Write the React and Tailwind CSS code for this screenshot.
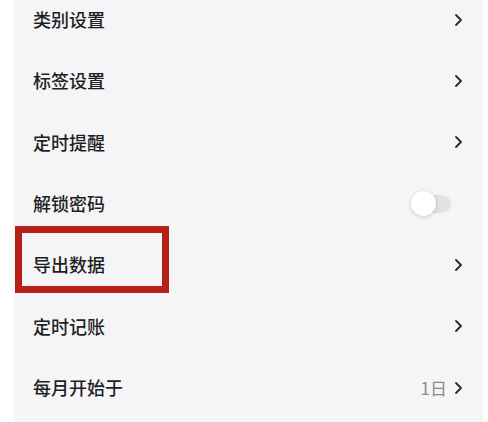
import React from "react";

const items = [
  { label: "类别设置", type: "link" },
  { label: "标签设置", type: "link" },
  { label: "定时提醒", type: "link" },
  { label: "解锁密码", type: "toggle" },
  { label: "导出数据", type: "link", marked: true },
  { label: "定时记账", type: "link" },
  { label: "每月开始于", type: "link", value: "1日" },
];

const Chevron = () => (
  <svg width="10" height="14" viewBox="0 0 10 14" fill="none">
    <path d="M3 2 L8 7 L3 12" stroke="#2a2a2a" strokeWidth="1.8" strokeLinecap="round" strokeLinejoin="round" />
  </svg>
);

const Toggle = () => (
  <div className="relative w-[40px] h-[25px] flex items-center">
    <div className="absolute left-[8px] right-0 h-[18px] rounded-full bg-[#e2e2e4]" />
    <div className="relative w-[25px] h-[25px] rounded-full bg-white shadow-[0_1px_4px_rgba(0,0,0,0.18)]" />
  </div>
);

const Row = ({ item }) => (
  <div className="relative h-[61.33px] flex items-center pl-[19px] pr-[20px]">
    {item.marked && (
      <div className="absolute left-[1px] -top-[8px] w-[154px] h-[67px] border-[7px] border-[#b52119]" />
    )}
    <span className="flex-1 text-[18px] font-medium text-[#1f1f1f]">{item.label}</span>
    {item.type === "toggle" ? (
      <div className="mr-[12px]">
        <Toggle />
      </div>
    ) : (
      <div className="flex items-center gap-[6px]">
        {item.value && <span className="text-[17px] text-[#8a8a8a]">{item.value}</span>}
        <Chevron />
      </div>
    )}
  </div>
);

export default function App() {
  return (
    <div
      className="w-[488px] h-[422px] bg-white overflow-hidden"
      style={{ fontFamily: '"Noto Sans CJK SC", "Noto Sans", sans-serif' }}
    >
      <div className="ml-[14px] mr-[5px] h-full bg-[#f5f5f7] flex flex-col overflow-hidden">
        <div className="-mt-[11px]">
          {items.map((item) => (
            <Row key={item.label} item={item} />
          ))}
        </div>
      </div>
    </div>
  );
}
